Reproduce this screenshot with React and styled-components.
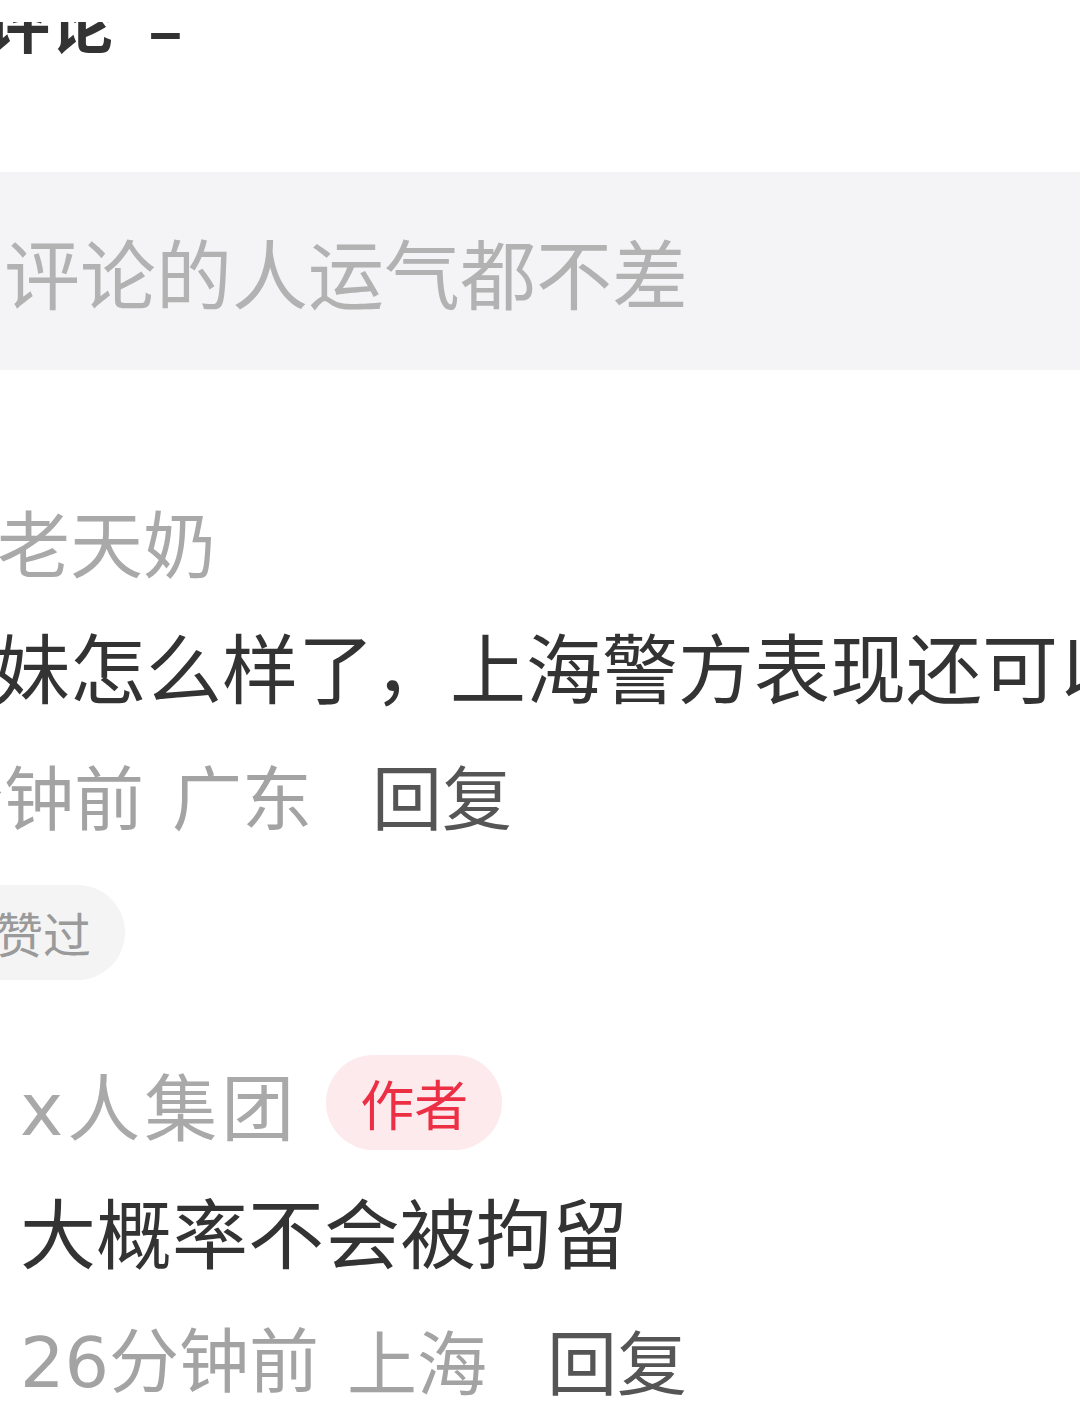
import React from "react";
import styled, { createGlobalStyle } from "styled-components";

const Global = createGlobalStyle`
  html, body {
    margin: 0;
    padding: 0;
    background: #ffffff;
    width: 1080px;
    height: 1401px;
    overflow: hidden;
  }
  body {
    font-family: "Noto Sans CJK SC", "Noto Sans", sans-serif;
  }
`;

const Page = styled.div`
  width: 1080px;
  height: 1401px;
  overflow: hidden;
  display: flex;
  flex-direction: column;
  background: #fff;
`;

/* top of the section title is hidden under the (cropped) sticky bar */
const HeaderClip = styled.div`
  margin-top: 22px;
  height: 32px;
  overflow: hidden;
`;

const Header = styled.div`
  margin-top: -34px;
  margin-left: -14px;
  height: 64px;
  font-size: 64px;
  line-height: 64px;
  font-weight: 700;
  color: #333;
  white-space: nowrap;
  display: flex;
  align-items: flex-start;
  gap: 34px;
`;

const Dash = styled.span`
  margin-top: 6px;
  font-weight: 700;
`;

const InputBox = styled.div`
  margin-top: 118px;
  height: 198px;
  background: #f4f4f6;
  display: flex;
  align-items: center;
  padding-left: 4px;
  font-size: 76px;
  color: #b2b2b2;
  white-space: nowrap;
`;

const Latin = styled.span`
  font-family: "DejaVu Sans", sans-serif;
`;

const Comment = styled.div`
  display: flex;
  flex-direction: column;
  margin-top: ${(p) => p.$top}px;
  padding-left: ${(p) => p.$indent}px;
`;

const Name = styled.div`
  height: 80px;
  line-height: 80px;
  font-size: 73px;
  letter-spacing: ${(p) => p.$spacing || 0}px;
  color: #a9a9a9;
  white-space: nowrap;
  margin-left: ${(p) => p.$shift || 0}px;
`;

const NameRow = styled.div`
  display: flex;
  align-items: center;
  height: 95px;
  gap: 28px;
`;

const AuthorTag = styled.span`
  height: 95px;
  padding: 0 34px;
  border-radius: 48px;
  background: #fdeaec;
  color: #ec2f45;
  font-size: 54px;
  line-height: 95px;
  white-space: nowrap;
`;

const Body = styled.div`
  margin-top: ${(p) => p.$top}px;
  height: 80px;
  line-height: 80px;
  font-size: 76px;
  color: #333;
  white-space: nowrap;
  margin-left: ${(p) => p.$shift || 0}px;
`;

const Meta = styled.div`
  margin-top: 55px;
  height: 70px;
  display: flex;
  align-items: center;
  font-size: 70px;
  line-height: 70px;
  white-space: nowrap;
  margin-left: ${(p) => p.$shift || 0}px;
`;

const Time = styled.span`
  color: #a3a3a3;
`;

const Place = styled.span`
  color: #a3a3a3;
  margin-left: 28px;
`;

const Reply = styled.span`
  color: #555;
  margin-left: 60px;
`;

const LikePill = styled.div`
  margin-top: 55px;
  align-self: flex-start;
  height: 95px;
  margin-left: -60px;
  padding: 0 34px 0 55px;
  border-radius: 48px;
  background: #f4f4f5;
  color: #9a9a9a;
  font-size: 48px;
  line-height: 95px;
  white-space: nowrap;
`;

export default function App() {
  return (
    <>
      <Global />
      <Page>
        <HeaderClip>
          <Header>
            <span>评论</span>
            <Dash>–</Dash>
          </Header>
        </HeaderClip>
        <InputBox>评论的人运气都不差</InputBox>
        <Comment $top={130} $indent={0}>
          <Name $shift={-3}>老天奶</Name>
          <Body $top={45} $shift={-6}>妹怎么样了，上海警方表现还可以</Body>
          <Meta $shift={-66}>
            <Time>分钟前</Time>
            <Place>广东</Place>
            <Reply>回复</Reply>
          </Meta>
          <LikePill>赞过</LikePill>
        </Comment>
        <Comment $top={75} $indent={20}>
          <NameRow>
            <Name $spacing={4}><Latin>x</Latin>人集团</Name>
            <AuthorTag>作者</AuthorTag>
          </NameRow>
          <Body $top={40}>大概率不会被拘留</Body>
          <Meta>
            <Time><Latin>26</Latin>分钟前</Time>
            <Place>上海</Place>
            <Reply>回复</Reply>
          </Meta>
        </Comment>
      </Page>
    </>
  );
}
